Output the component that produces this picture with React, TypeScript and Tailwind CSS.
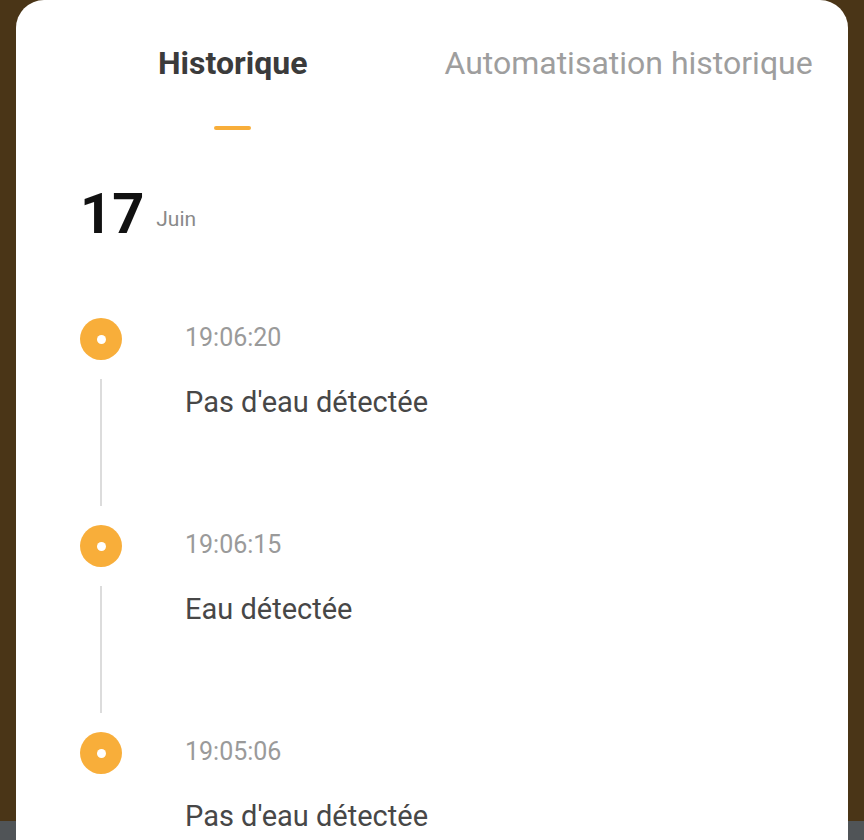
const events = [
  { time: "19:06:20", label: "Pas d'eau détectée" },
  { time: "19:06:15", label: "Eau détectée" },
  { time: "19:05:06", label: "Pas d'eau détectée" },
];

function TimelineItem({ time, label, last }: { time: string; label: string; last?: boolean }) {
  return (
    <div className="flex">
      <div className="flex w-[42px] flex-col items-center">
        <div className="flex h-[42px] w-[42px] items-center justify-center rounded-full bg-[#f8ae3a]">
          <div className="h-[9px] w-[9px] rounded-full bg-white" />
        </div>
        {!last && <div className="my-[19px] h-[127px] w-[2px] bg-[#dcdcdc]" />}
      </div>
      <div className="ml-[63px] flex flex-col">
        <div className="flex h-[39px] items-center text-[25px] text-[#9a9a9a]">{time}</div>
        <div className="mt-[27px] text-[29px] leading-[36px] text-[#474747]">{label}</div>
      </div>
    </div>
  );
}

export default function App() {
  return (
    <div
      className="h-[840px] w-[864px] overflow-hidden bg-[linear-gradient(to_bottom,#4a3517_821px,#505457_821px)] px-4"
      style={{ fontFamily: "Roboto, 'Noto Sans', sans-serif" }}
    >
      <div className="h-full rounded-t-[28px] bg-white">
        {/* tabs */}
        <div className="flex pl-[142px] pt-[43px]">
          <div className="flex flex-col items-center">
            <div className="text-[32px] font-bold leading-[40px] text-[#3b3b3b]">Historique</div>
            <div className="mt-[43px] h-[4px] w-[37px] rounded-full bg-[#f8ae3a]" />
          </div>
          <div className="ml-[137px] text-[32px] leading-[40px] text-[#9e9e9e]">Automatisation historique</div>
        </div>

        {/* date */}
        <div className="mt-[56px] flex items-start pl-[64px]">
          <div className="text-[56px] font-bold leading-none text-[#111]">17</div>
          <div className="ml-[12px] mt-[18px] text-[21px] text-[#8a8a8a]">Juin</div>
        </div>

        {/* timeline */}
        <div className="mt-[76px] flex flex-col pl-[64px]">
          {events.map((e, i) => (
            <TimelineItem key={i} time={e.time} label={e.label} last={i === events.length - 1} />
          ))}
        </div>
      </div>
    </div>
  );
}
